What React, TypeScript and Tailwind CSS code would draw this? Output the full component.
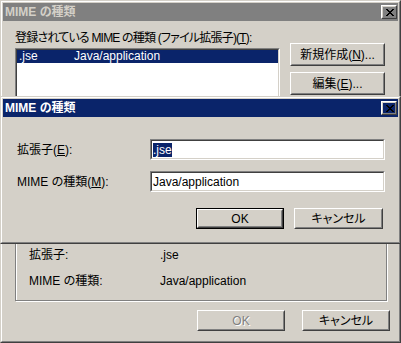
import React from "react";

function Raised({
  children,
  className = "",
  isDefault = false,
}: {
  children: React.ReactNode;
  className?: string;
  isDefault?: boolean;
}) {
  const inner = (
    <div className="h-full w-full border border-t-white border-l-white border-r-[#404040] border-b-[#404040]">
      <div className="h-full w-full border border-t-[#d4d0c8] border-l-[#d4d0c8] border-r-[#808080] border-b-[#808080] flex items-center justify-center">
        {children}
      </div>
    </div>
  );
  if (isDefault) {
    return <div className={"border border-black " + className}>{inner}</div>;
  }
  return <div className={className}>{inner}</div>;
}

function Sunken({ children, className = "" }: { children?: React.ReactNode; className?: string }) {
  return (
    <div className={"border border-t-[#808080] border-l-[#808080] border-r-white border-b-white " + className}>
      <div className="h-full w-full border border-t-[#404040] border-l-[#404040] border-r-[#d4d0c8] border-b-[#d4d0c8] bg-white">
        {children}
      </div>
    </div>
  );
}

function CloseGlyph() {
  return (
    <svg width="8" height="7" viewBox="0 0 8 7" shapeRendering="crispEdges" className="block">
      <g fill="#000">
        <rect x="0" y="0" width="2" height="1" />
        <rect x="6" y="0" width="2" height="1" />
        <rect x="1" y="1" width="2" height="1" />
        <rect x="5" y="1" width="2" height="1" />
        <rect x="2" y="2" width="4" height="1" />
        <rect x="3" y="3" width="2" height="1" />
        <rect x="2" y="4" width="4" height="1" />
        <rect x="1" y="5" width="2" height="1" />
        <rect x="5" y="5" width="2" height="1" />
        <rect x="0" y="6" width="2" height="1" />
        <rect x="6" y="6" width="2" height="1" />
      </g>
    </svg>
  );
}

function Window({
  title,
  active,
  className = "",
  children,
}: {
  title: string;
  active: boolean;
  className?: string;
  children: React.ReactNode;
}) {
  return (
    <div
      className={
        "bg-[#d4d0c8] border border-t-[#d4d0c8] border-l-[#d4d0c8] border-r-[#404040] border-b-[#404040] " +
        className
      }
    >
      <div className="h-full border border-t-white border-l-white border-r-[#808080] border-b-[#808080] p-px flex flex-col">
        <div
          className={
            "h-[18px] shrink-0 flex items-center justify-between pl-[2px] pr-[1px] " +
            (active ? "bg-[#0a246a]" : "bg-[#808080]")
          }
        >
          <span
            className={
              "font-bold text-[12px] leading-[14px] " + (active ? "text-white" : "text-[#d4d0c8]")
            }
          >
            {title}
          </span>
          <Raised className="w-[16px] h-[14px] shrink-0">
            <span className="pl-px pt-px flex">
              <CloseGlyph />
            </span>
          </Raised>
        </div>
        {children}
      </div>
    </div>
  );
}

function U({ children }: { children: React.ReactNode }) {
  return <span className="underline underline-offset-[1px]">{children}</span>;
}

export default function App() {
  return (
    <div className="w-[401px] h-[343px] relative overflow-hidden bg-[#d4d0c8] text-[12px] leading-[14px] text-black font-['Liberation_Sans','Noto_Sans_CJK_JP',sans-serif] [font-feature-settings:'palt']">
      <Window title="MIME の種類" active={false} className="w-[401px] h-[343px]">
        <div className="flex flex-col pl-[12px] pr-[8px] pt-[10px]">
          <div className="flex gap-[10px]">
            <div className="w-[265px]">
              <div className="h-[17px] whitespace-nowrap tracking-[-0.8px]">
                登録されている MIME の種類 (ファイル拡張子)(<U>T</U>):
              </div>
              <Sunken className="h-[82px]">
                <div className="flex h-[13px] leading-[13px] bg-[#0a246a] text-white">
                  <span className="w-[57px] pl-[2px]">.jse</span>
                  <span>Java/application</span>
                </div>
              </Sunken>
            </div>
            <div className="w-[95px] pt-[12px] flex flex-col gap-[6px]">
              <Raised className="h-[23px]">
                <span>
                  新規作成(<U>N</U>)...
                </span>
              </Raised>
              <Raised className="h-[23px]">
                <span>
                  編集(<U>E</U>)...
                </span>
              </Raised>
            </div>
          </div>

          <div className="mt-[10px] w-[372px] h-[161px] border border-[#808080] shadow-[inset_1px_1px_0_#fff,1px_1px_0_#fff] flex flex-col justify-end pl-[13px] pb-[12px] gap-[12px]">
            <div className="grid grid-cols-[131px_1fr]">
              <span>拡張子:</span>
              <span>.jse</span>
            </div>
            <div className="grid grid-cols-[131px_1fr]">
              <span>MIME の種類:</span>
              <span>Java/application</span>
            </div>
          </div>

          <div className="mt-[9px] flex justify-end gap-[17px]">
            <Raised className="w-[88px] h-[21px]">
              <span className="text-[#808080] [text-shadow:1px_1px_0_#fff]">OK</span>
            </Raised>
            <Raised className="w-[88px] h-[21px]">
              <span>キャンセル</span>
            </Raised>
          </div>
        </div>
      </Window>

      <Window title="MIME の種類" active className="absolute left-0 top-[96px] w-[401px] h-[148px]">
        <div className="flex flex-col pl-[14px] pt-[22px]">
          <div className="flex items-center">
            <span className="w-[133px]">
              拡張子(<U>E</U>):
            </span>
            <Sunken className="w-[235px] h-[21px]">
              <div className="h-full flex items-center pl-px">
                <span className="bg-[#0a246a] text-white">.jse</span>
              </div>
            </Sunken>
          </div>
          <div className="flex items-center mt-[11px]">
            <span className="w-[133px]">
              MIME の種類(<U>M</U>):
            </span>
            <Sunken className="w-[235px] h-[21px]">
              <div className="h-full flex items-center pl-px">
                <span>Java/application</span>
              </div>
            </Sunken>
          </div>
          <div className="flex gap-[10px] pl-[179px] mt-[16px]">
            <Raised isDefault className="w-[88px] h-[21px]">
              <span>OK</span>
            </Raised>
            <Raised className="w-[89px] h-[21px]">
              <span>キャンセル</span>
            </Raised>
          </div>
        </div>
      </Window>
    </div>
  );
}
